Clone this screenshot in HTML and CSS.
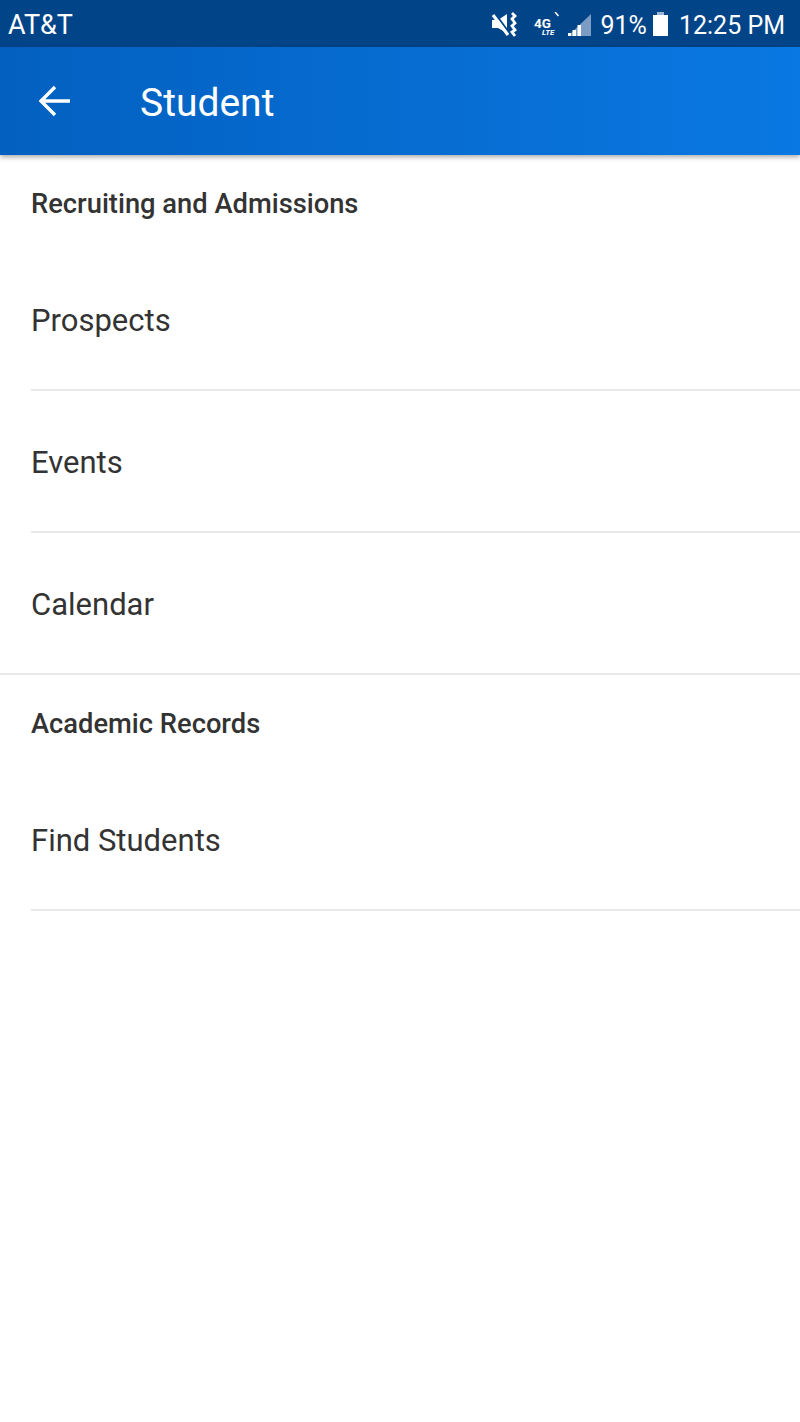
FILE: index.html
```html
<!DOCTYPE html>
<html lang="en">
<head>
<meta charset="utf-8">
<title>Student</title>
<link rel="stylesheet" href="styles.css">
</head>
<body>
    <div class="status_bar">
        <span class="carrier">AT&amp;T</span>
        <div class="status_right">
            <svg class="icon_mute" width="27" height="26" viewBox="0 0 27 26">
                <path d="M1 8h6l9-6v19l-9-5h-6z" fill="#fff"/>
                <path d="M3 0l16 22" stroke="#024488" stroke-width="2" fill="none"/>
                <path d="M2 3l15 20" stroke="#fff" stroke-width="3.200" fill="none"/>
                <path d="M21 1l3 3-3 3 3 4-3 3 3 4-3 2 3 4" stroke="#fff" stroke-width="2.800" fill="none"/>
            </svg>
            <svg class="icon_lte" width="29" height="26" viewBox="0 0 29 26">
                <text x="2" y="16" class="lte_big">4G</text>
                <text x="10" y="23" class="lte_small">LTE</text>
                <path d="M23 0l3.500 4" stroke="#fff" stroke-width="1.500"/>
            </svg>
            <svg class="icon_signal" width="24" height="26" viewBox="0 0 24 26">
                <path d="M1 24L24 2v22z" fill="#7d9cc4"/>
                <path d="M1 21h3v3h-3zM5.500 18h3.500v6h-3.500zM10.500 13h3.500v11h-3.500z" fill="#fff"/>
            </svg>
            <span class="status_text battery_pct">91%</span>
            <svg class="icon_battery" width="15" height="26" viewBox="0 0 15 26">
                <path d="M4 0h7v3h-7z" fill="#9db4d4"/>
                <path d="M0 3h15v21h-15z" fill="#fff"/>
            </svg>
            <span class="status_text clock">12:25 PM</span>
        </div>
    </div>

    <div class="app_bar">
        <svg class="back_arrow" width="34" height="34" viewBox="0 0 34 34">
            <path d="M32 17H3M17 3L3 17l14 14" stroke="#fff" stroke-width="3.400" fill="none"/>
        </svg>
        <span class="app_title">Student</span>
    </div>

    <div class="section_title">Recruiting and Admissions</div>
    <div class="menu_item">Prospects</div>
    <div class="menu_item">Events</div>
    <div class="menu_item last_item">Calendar</div>

    <div class="section_title">Academic Records</div>
    <div class="menu_item">Find Students</div>
</body>
</html>
```

FILE: styles.css
```css
body {
    margin: 0;
    background-color: #fff;
    font-family: Roboto, "Liberation Sans", sans-serif;
    color: #333;
}

.status_bar {
    height: 47px;
    background-color: #024488;
    color: #fff;
    display: flex;
    align-items: center;
    justify-content: space-between;
    padding: 2px 15px 0 8px;
    box-sizing: border-box;
}

.carrier {
    font-size: 27px;
}

.status_right {
    display: flex;
    align-items: center;
}

.status_text {
    font-size: 25px;
    padding-top: 2px;
}

.icon_lte {
    margin-left: 14px;
}

.icon_signal {
    margin-left: 6px;
}

.battery_pct {
    margin-left: 10px;
}

.icon_battery {
    margin-left: 6px;
}

.clock {
    margin-left: 11px;
}

.lte_big {
    font-size: 13.500px;
    font-weight: 700;
    fill: #fff;
}

.lte_small {
    font-size: 8px;
    font-weight: 700;
    font-style: italic;
    fill: #fff;
}

.app_bar {
    height: 108px;
    background: linear-gradient(90deg, #0360c0, #0a78e2);
    color: #fff;
    display: flex;
    align-items: center;
    padding-left: 38px;
    box-shadow: 0 2px 5px rgba(0, 0, 0, 0.35);
}

.back_arrow {
    flex-shrink: 0;
}

.app_title {
    font-size: 39px;
    margin: 4px 0 0 68px;
}

.section_title {
    height: 94px;
    padding: 34px 0 0 31px;
    box-sizing: border-box;
    font-size: 27.300px;
    font-weight: 500;
    line-height: 30px;
}

.menu_item {
    height: 142px;
    margin-left: 31px;
    box-sizing: border-box;
    border-bottom: 2px solid #e8eaea;
    font-size: 31px;
    line-height: 36px;
    padding-top: 54px;
}

.last_item {
    margin-left: 0;
    padding-left: 31px;
}
```
